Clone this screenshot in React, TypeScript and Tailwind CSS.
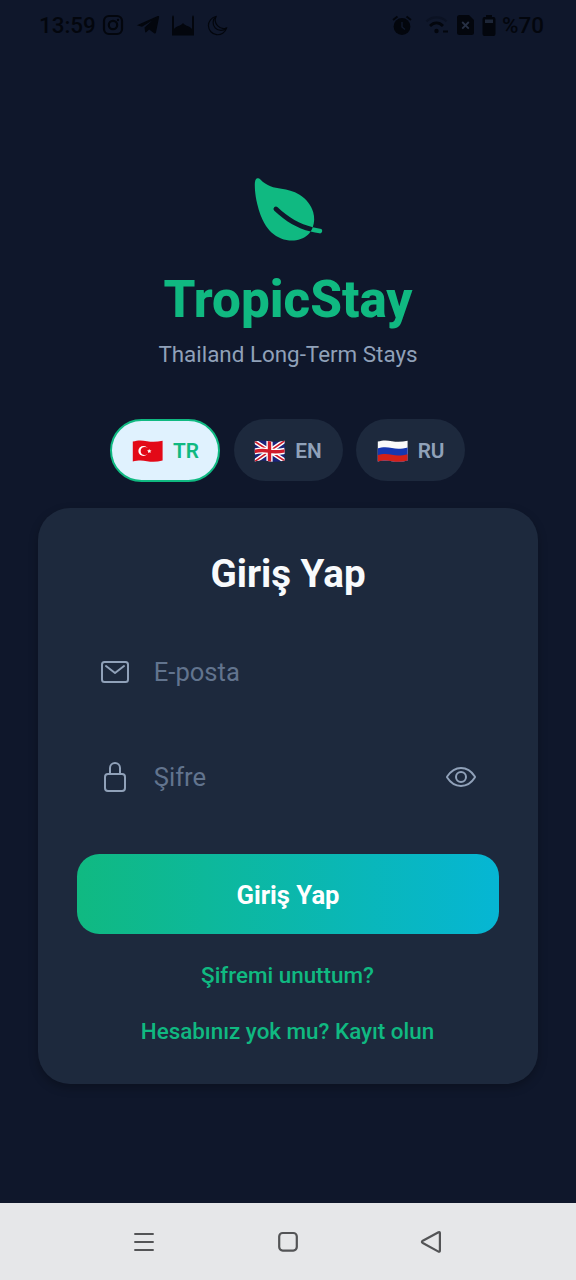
import type { ReactNode } from 'react';
import { IoEyeOutline, IoLeaf, IoLockClosedOutline, IoMailOutline } from 'react-icons/io5';

const wave = 'M.8 2.6C6 1 10 1.2 15 2.2C20 3.2 25 3 30.6 1.8V21.6C25 23 20 23.2 15 22.2C10 21.2 6 21.2 .8 22.6Z';

function FlagTR() {
  return (
    <svg className="h-[24px] w-[31px]" viewBox="0 0 31 24">
      <path d={wave} fill="#e30917" />
      <circle cx="11.4" cy="12" r="5" fill="#fff" />
      <circle cx="12.8" cy="12" r="4.1" fill="#e30917" />
      <path d="M17.2 9.9l-.6 1.3-1.6.3 1.2 1-.2 1.5 1.3-.7 1.3.7-.2-1.5 1.1-1-1.6-.3z" fill="#fff" />
    </svg>
  );
}

function FlagGB() {
  return (
    <svg className="h-[24px] w-[31px]" viewBox="0 0 31 24">
      <clipPath id="gb-wave">
        <path d={wave} />
      </clipPath>
      <g clipPath="url(#gb-wave)" fill="none">
        <path d="M0 0H31V24H0z" fill="#1a237b" />
        <path d="M0 2L31 22M31 1.5L0 23" stroke="#fff" strokeWidth="4.6" />
        <path d="M0 2L31 22M31 1.5L0 23" stroke="#cf1b2b" strokeWidth="1.6" />
        <path d="M15.5 0V24M0 12.6C6 11 10 11.2 15 12.2C20 13.2 25 13 31 11.8" stroke="#fff" strokeWidth="6.2" />
        <path d="M15.5 0V24M0 12.6C6 11 10 11.2 15 12.2C20 13.2 25 13 31 11.8" stroke="#cf1b2b" strokeWidth="3.4" />
      </g>
    </svg>
  );
}

function FlagRU() {
  return (
    <svg className="h-[24px] w-[31px]" viewBox="0 0 31 24">
      <clipPath id="ru-wave">
        <path d={wave} />
      </clipPath>
      <g clipPath="url(#ru-wave)">
        <path d="M0 0H31V24H0z" fill="#fafafa" />
        <path d="M0 9.4C6 7.8 10 8 15 9C20 10 25 9.8 31 8.4V24H0Z" fill="#1737b0" />
        <path d="M0 16.2C6 14.6 10 14.8 15 15.8C20 16.8 25 16.6 31 15.2V24H0Z" fill="#d32018" />
      </g>
    </svg>
  );
}

function StatusBar() {
  return (
    <div className="flex h-[51px] items-center justify-between pr-[32px] pl-[39px] text-[22.4px] font-medium text-[#03060d]">
      <div className="flex items-center">
        <span className="w-[63px] whitespace-nowrap">13:59</span>
        <svg className="h-[22px] w-[22px]" viewBox="0 0 22 22" fill="none" stroke="currentColor" strokeWidth="2.2">
          <rect x="2" y="2" width="18" height="18" rx="5" />
          <circle cx="11" cy="11" r="4.2" />
          <circle cx="16" cy="6" r="1.2" fill="currentColor" stroke="none" />
        </svg>
        <svg className="ml-[12px] h-[20px] w-[24px]" viewBox="0 0 24 20" fill="currentColor">
          <path d="M.8 10.2L21.7 1.1c1-.4 1.6.2 1.4 1.2L20 17.4c-.3 1.2-1 1.4-1.9.8l-5-3.6-2.6 2.5c-.6.6-1.3.4-1.4-.4l-.6-4.3L16 5.7 6 11.8z" />
        </svg>
        <svg className="ml-[12px] h-[22px] w-[22px]" viewBox="0 0 22 22" fill="currentColor">
          <path d="M0 21.5V3L1 1l1 2v12c2-3 7-3 9-6 2 3 7 3 9 6V3l1-2 1 2v18.5z" />
        </svg>
        <svg className="ml-[13px] h-[21px] w-[21px]" viewBox="0 0 21 21" fill="none" stroke="currentColor" strokeWidth="1.2">
          <path d="M9 1.5A9.2 9.2 0 1 0 19.5 13A8.5 8.5 0 0 1 9 1.5z" />
          <path d="M9 1.5A7.8 7.8 0 1 0 19.5 13" />
        </svg>
      </div>
      <div className="flex items-center">
        <svg className="h-[21px] w-[20px]" viewBox="0 0 20 21" fill="currentColor">
          <circle cx="10" cy="11.5" r="8.4" />
          <path d="M1 5L5.5 1.5M19 5L14.5 1.5" stroke="currentColor" strokeWidth="2" />
          <path d="M10 7v5l3 2.5" fill="none" stroke="#0f172a" strokeWidth="1.5" />
        </svg>
        <svg className="ml-[13px] h-[20px] w-[24px]" viewBox="0 0 24 20" fill="none" stroke="currentColor">
          <path d="M1.5 6.5C7 1 16 1 21.5 6.5" strokeWidth="2.4" opacity=".28" />
          <path d="M5 11c4-4 9-4 13 0" strokeWidth="2.8" />
          <circle cx="11.5" cy="16" r="2.2" fill="currentColor" stroke="none" />
          <path d="M18 16.5h5" strokeWidth="2" />
        </svg>
        <svg className="ml-[8px] h-[20px] w-[17px]" viewBox="0 0 17 20" fill="currentColor">
          <path d="M2.5 0H12l5 5v12.5a2.5 2.5 0 0 1-2.5 2.5h-12A2.5 2.5 0 0 1 0 17.5V2.5A2.5 2.5 0 0 1 2.5 0z" />
          <path d="M5.2 7l6.6 6.6M11.8 7l-6.6 6.6" stroke="#273044" strokeWidth="1.8" />
        </svg>
        <svg className="ml-[8px] h-[21px] w-[14px]" viewBox="0 0 14 21" fill="currentColor">
          <path d="M4 0h6v2h1.5A2 2 0 0 1 13.5 4v15a2 2 0 0 1-2 2h-9a2 2 0 0 1-2-2V4a2 2 0 0 1 2-2H4z" />
          <path d="M3 4.5h8V8H3z" fill="#1d2638" />
        </svg>
        <span className="ml-[6px] whitespace-nowrap">%70</span>
      </div>
    </div>
  );
}

function LanguageButton({ flag, label, active = false }: { flag: ReactNode; label: string; active?: boolean }) {
  return (
    <button
      className={
        active
          ? 'flex h-[63px] w-[110px] items-center justify-center gap-[10px] rounded-full border-2 border-[#10b981] bg-[#e0f2fe] pt-[2px] pl-px text-[#10b981]'
          : 'flex h-[62px] w-[109px] items-center justify-center gap-[10px] rounded-full bg-slate-800 pt-[2px] text-slate-400'
      }
    >
      {flag}
      <span className="text-[20.8px] font-semibold">{label}</span>
    </button>
  );
}

function Field({ icon, placeholder, action }: { icon: ReactNode; placeholder: string; action?: ReactNode }) {
  return (
    <div className="flex h-[80px] items-center px-[22px] text-slate-400">
      {icon}
      <span className="ml-[23px] flex-1 text-[25.6px] text-slate-500">{placeholder}</span>
      {action}
    </div>
  );
}

export default function App() {
  return (
    <div className="flex h-[1280px] w-[576px] flex-col overflow-hidden bg-slate-900 font-['Roboto',sans-serif]">
      <StatusBar />

      {/* Brand */}
      <header className="mt-[120px] flex flex-col items-center">
        <IoLeaf className="h-[76.8px] w-[76.8px] text-[#10b981]" />
        <h1 className="mt-[22px] text-[51.2px] leading-[60px] font-extrabold text-[#10b981]">TropicStay</h1>
        <p className="mt-[11px] text-[22.4px] leading-[26px] text-slate-400">Thailand Long-Term Stays</p>
      </header>

      {/* Language switch */}
      <div className="mt-[52px] mr-px flex h-[63px] items-center justify-center gap-[13.6px]">
        <LanguageButton flag={<FlagTR />} label="TR" active />
        <LanguageButton flag={<FlagGB />} label="EN" />
        <LanguageButton flag={<FlagRU />} label="RU" />
      </div>

      {/* Login card */}
      <main className="mx-[38.4px] mt-[26px] flex h-[576px] shrink-0 flex-col rounded-[32px] bg-slate-800 px-[38.4px] pt-[43px] shadow-[0_4px_10px_rgba(0,0,0,0.25)]">
        <h2 className="text-center text-[38.6px] leading-[46px] font-bold text-slate-50">Giriş Yap</h2>
        <div className="mt-[35px] flex flex-col gap-[25.6px]">
          <Field icon={<IoMailOutline className="h-[32px] w-[32px]" />} placeholder="E-posta" />
          <Field
            icon={<IoLockClosedOutline className="h-[32px] w-[32px]" />}
            placeholder="Şifre"
            action={<IoEyeOutline className="h-[32px] w-[32px]" />}
          />
        </div>
        <button className="mt-[36.8px] h-[80px] shrink-0 rounded-[22.4px] bg-[linear-gradient(90deg,#10b981,#06b6d4)] pt-[2px] text-[25.6px] font-bold text-white">
          Giriş Yap
        </button>
        <a className="mt-[27.6px] mr-px text-center text-[22.4px] leading-[26px] font-medium text-[#10b981]">
          Şifremi unuttum?
        </a>
        <a className="mt-[30px] mr-px text-center text-[22.4px] leading-[26px] font-medium text-[#10b981]">
          Hesabınız yok mu? Kayıt olun
        </a>
      </main>

      {/* Android navigation */}
      <nav className="mt-auto flex h-[77px] shrink-0 items-center justify-between bg-[#e6e7e9] px-[132px] text-[#535456]">
        <svg className="h-[24px] w-[24px]" viewBox="0 0 24 24" fill="none" stroke="currentColor" strokeWidth="2">
          <path d="M2.3 4h19.4M2.3 12h19.4M2.3 20h19.4" />
        </svg>
        <svg className="h-[24px] w-[24px]" viewBox="0 0 24 24" fill="none" stroke="currentColor" strokeWidth="2.2">
          <rect x="3.2" y="3" width="17.6" height="17.6" rx="3.5" />
        </svg>
        <svg className="h-[24px] w-[24px]" viewBox="0 0 24 24" fill="none" stroke="currentColor" strokeWidth="2.2" strokeLinejoin="round">
          <path d="M2.8 10.7L18.5 2.2q1.4-.5 1.4 1v17.4q0 1.5-1.4 1L2.8 13q-1.8-1.1 0-2.3z" />
        </svg>
      </nav>
    </div>
  );
}
